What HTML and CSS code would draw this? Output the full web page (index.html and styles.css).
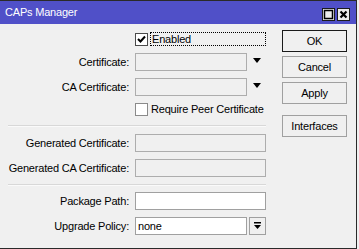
FILE: index.html
```html
<!DOCTYPE html>
<html lang="en">

<head>
    <meta charset="UTF-8">
    <meta name="viewport" content="width=device-width, initial-scale=1.0">
    <title>CAPs Manager</title>
    <link rel="stylesheet" href="styles.css">
</head>

<body>

    <div class="window">
        <div class="titlebar">
            <span class="title">CAPs Manager</span>
            <div class="title-buttons">
                <span class="tbtn">
                    <svg width="11" height="11" viewBox="0 0 11 11"><rect x="1.5" y="1.5" width="8" height="8" fill="none" stroke="#000" stroke-width="1.5"/></svg>
                </span>
                <span class="tbtn">
                    <svg width="11" height="11" viewBox="0 0 11 11"><path d="M2.5 2.5 L8.5 8.5 M8.5 2.5 L2.5 8.5" stroke="#000" stroke-width="2.2"/></svg>
                </span>
            </div>
        </div>

        <div class="content">
            <div class="form">
                <div class="row check-row first">
                    <span class="label"></span>
                    <div class="check">
                        <span class="box dark">
                            <svg width="11" height="11" viewBox="0 0 11 11"><path d="M2 5 L4.5 7.5 L9 2.5" fill="none" stroke="#000" stroke-width="2"/></svg>
                        </span>
                        <span class="check-text focus">Enabled</span>
                    </div>
                </div>

                <div class="row field-row gap8">
                    <span class="label">Certificate:</span>
                    <div class="field">
                        <span class="input disabled short"></span>
                        <span class="arrow"></span>
                    </div>
                </div>

                <div class="row field-row">
                    <span class="label">CA Certificate:</span>
                    <div class="field">
                        <span class="input disabled short"></span>
                        <span class="arrow"></span>
                    </div>
                </div>

                <div class="row check-row gap6">
                    <span class="label"></span>
                    <div class="check">
                        <span class="box"></span>
                        <span class="check-text">Require Peer Certificate</span>
                    </div>
                </div>

                <div class="separator sep1"></div>

                <div class="row field-row gap8">
                    <span class="label">Generated Certificate:</span>
                    <div class="field">
                        <span class="input disabled"></span>
                    </div>
                </div>

                <div class="row field-row">
                    <span class="label">Generated CA Certificate:</span>
                    <div class="field">
                        <span class="input disabled"></span>
                    </div>
                </div>

                <div class="separator sep2"></div>

                <div class="row field-row">
                    <span class="label">Package Path:</span>
                    <div class="field">
                        <span class="input"></span>
                    </div>
                </div>

                <div class="row field-row">
                    <span class="label">Upgrade Policy:</span>
                    <div class="field">
                        <span class="input short">none</span>
                        <span class="drop-btn">
                            <svg width="9" height="9" viewBox="0 0 9 9"><rect x="1" y="0" width="7" height="1.5" fill="#000"/><path d="M1 3 H8 L4.5 7 Z" fill="#000"/></svg>
                        </span>
                    </div>
                </div>
            </div>

            <div class="buttons">
                <button class="btn default">OK</button>
                <button class="btn">Cancel</button>
                <button class="btn">Apply</button>
                <button class="btn spaced">Interfaces</button>
            </div>
        </div>
    </div>

</body>

</html>
```

FILE: styles.css
```css
body, html {
    margin: 0;
    padding: 0;
    background-color: #f0f0f0;
    font-family: 'Liberation Sans', Arial, sans-serif;
    font-size: 11px;
    letter-spacing: -0.2px;
    color: #000;
}

.window {
    width: 356px;
    height: 247px;
    background-color: #f0f0f0;
    border-top: 1px solid #2a2a2a;
    border-right: 1px solid #2a2a2a;
    border-bottom: 1px solid #2a2a2a;
    display: flex;
    flex-direction: column;
}

.titlebar {
    height: 23px;
    background-color: #5050c8;
    display: flex;
    align-items: center;
    justify-content: space-between;
    padding-left: 5px;
}

.title {
    color: #fff;
    font-size: 11px;
    margin-top: -1px;
}

.title-buttons {
    display: flex;
    gap: 2px;
    margin-right: 6px;
    margin-top: 4px;
}

.tbtn {
    width: 11px;
    height: 11px;
    border: 1px solid #1c1c1c;
    background-color: #ececec;
    display: flex;
    align-items: center;
    justify-content: center;
}

.content {
    display: flex;
}

.form {
    width: 266px;
    padding-top: 7px;
}

.row {
    display: grid;
    grid-template-columns: 129px 131px;
    column-gap: 6px;
    margin-top: 7px;
}

.row.first {
    margin-top: 0;
}

.row.gap8 {
    margin-top: 8px;
}

.row.gap6 {
    margin-top: 6px;
}

.label {
    text-align: right;
    line-height: 18px;
    white-space: nowrap;
}

.field-row {
    height: 18px;
}

.field {
    display: flex;
    align-items: center;
}

.input {
    box-sizing: border-box;
    width: 131px;
    height: 18px;
    border: 1px solid #a0a0a0;
    background-color: #fff;
    padding-left: 2px;
    line-height: 16px;
}

.input.short {
    width: 112px;
}

.input.disabled {
    background-color: #f0f0f0;
    border-color: #adadad;
}

.arrow {
    width: 0;
    height: 0;
    margin-left: 6px;
    margin-top: -3px;
    border-left: 4.5px solid transparent;
    border-right: 4.5px solid transparent;
    border-top: 5px solid #000;
}

.drop-btn {
    box-sizing: border-box;
    width: 17px;
    height: 18px;
    margin-left: 2px;
    border: 1px solid #a0a0a0;
    background-color: #f0f0f0;
    display: flex;
    align-items: center;
    justify-content: center;
}

.check-row {
    height: 14px;
}

.check {
    display: flex;
    align-items: center;
}

.box {
    box-sizing: border-box;
    width: 13px;
    height: 13px;
    border: 1px solid #8a8a8a;
    background-color: #fff;
    display: flex;
    align-items: center;
    justify-content: center;
}

.box.dark {
    border-color: #4a4a4a;
    margin-top: 2px;
}

.check-text {
    margin-left: 3px;
    line-height: 12px;
    white-space: nowrap;
}

.check-text.focus {
    box-sizing: border-box;
    width: 119px;
    height: 14px;
    border: 1px dotted #000;
    padding-left: 1px;
    margin-left: 2px;
}

.separator {
    height: 1px;
    margin-left: 8px;
    background-color: #d8d8d8;
    border-bottom: 1px solid #fafafa;
}

.sep1 {
    margin-top: 9px;
    margin-bottom: -1px;
}

.sep2 {
    margin-top: 7px;
    margin-bottom: -1px;
}

.buttons {
    display: flex;
    flex-direction: column;
    gap: 4px;
    margin-left: 16px;
    padding-top: 6px;
}

.btn {
    box-sizing: border-box;
    width: 65px;
    height: 22px;
    padding: 0;
    font-family: 'Liberation Sans', Arial, sans-serif;
    font-size: 11px;
    letter-spacing: -0.2px;
    color: #000;
    background-color: #f0f0f0;
    border: 1px solid #a0a0a0;
    border-radius: 0;
}

.btn.default {
    border: 1px solid #1a1a1a;
}

.btn.spaced {
    margin-top: 7px;
}
```
